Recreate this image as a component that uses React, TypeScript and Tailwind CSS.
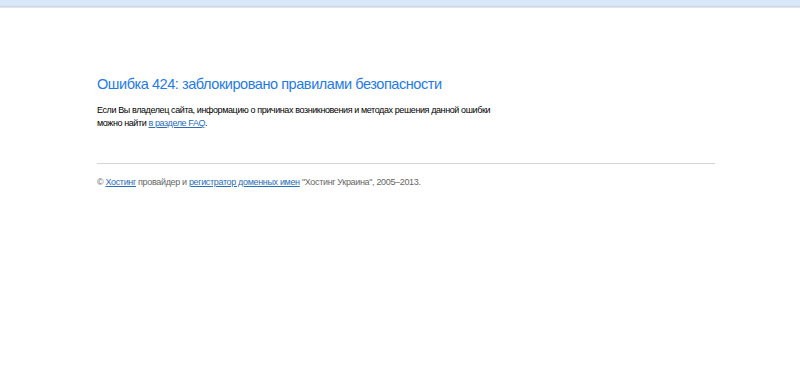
export default function App() {
  return (
    <div className="h-[380px] w-[800px] bg-white font-['Liberation_Sans',Arial,sans-serif]">
      <div className="h-[7px] bg-[#d9e8f8] border-b border-[#c9d7e6]" />
      <div className="h-px bg-[#e4e4e4]" />

      <div className="ml-[97px] w-[618px] pt-[67px]">
        <h1 className="text-[14.5px] leading-[18px] tracking-[-0.44px] text-[#1f7be6]">
          Ошибка 424: заблокировано правилами безопасности
        </h1>
        <p className="mt-[11px] text-[9px] leading-[13px] tracking-[-0.4px] text-black">
          Если Вы владелец сайта, информацию о причинах возникновения и методах решения данной ошибки
          <br />
          можно найти{' '}
          <a href="#" className="text-[#2a6ebb] underline">
            в разделе FAQ
          </a>
          .
        </p>

        <div className="mt-[33px] h-px bg-[#d4d4d4]" />

        <p className="mt-[12px] text-[9px] leading-[13px] tracking-[-0.34px] text-[#666]">
          ©{' '}
          <a href="#" className="text-[#2a6ebb] underline">
            Хостинг
          </a>{' '}
          провайдер и{' '}
          <a href="#" className="text-[#2a6ebb] underline">
            регистратор доменных имен
          </a>{' '}
          "Хостинг Украина", 2005–2013.
        </p>
      </div>
    </div>
  );
}
